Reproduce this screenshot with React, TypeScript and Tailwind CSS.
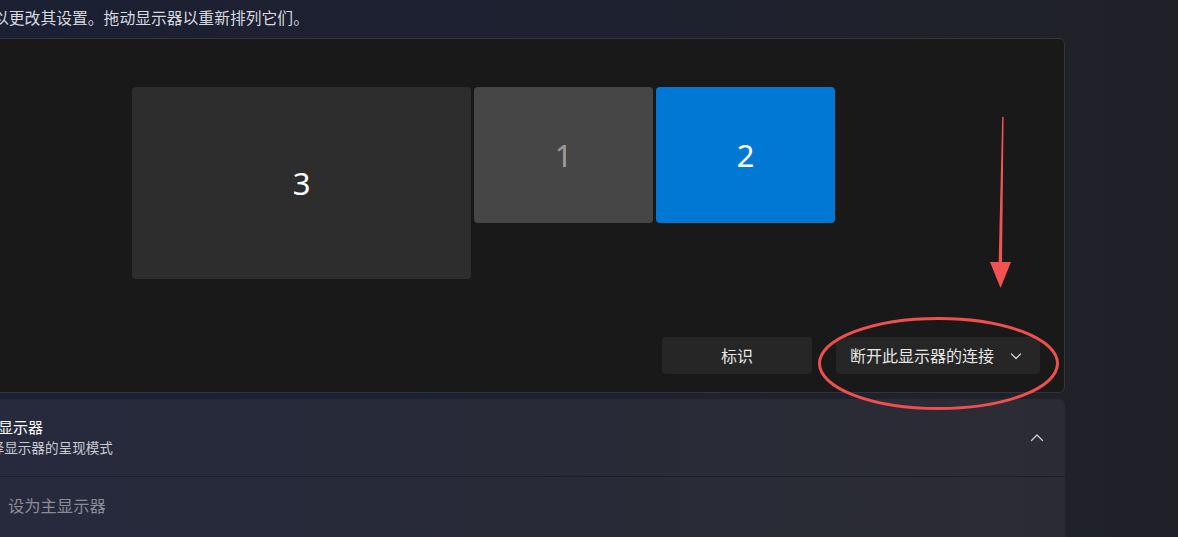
import React from 'react';

const cjk = { fontFamily: '"Noto Sans", "Noto Sans CJK SC", sans-serif' };

const monitors = [
  { id: '3', className: 'left-[191px] top-[48px] w-[339px] h-[192px] bg-[#2d2d2d] text-white' },
  { id: '1', className: 'left-[533px] top-[48px] w-[179px] h-[136px] bg-[#464646] text-[#9c9c9c]' },
  { id: '2', className: 'left-[715px] top-[48px] w-[179px] h-[136px] bg-[#0078d4] text-white' },
];

function Chevron({ up }: { up?: boolean }) {
  return (
    <svg width="14" height="14" viewBox="0 0 14 14" fill="none">
      <polyline
        points={up ? '1.5,9.5 7,4 12.5,9.5' : '2.5,5 7,9.5 11.5,5'}
        stroke="#d0d0d0"
        strokeWidth="1.3"
        strokeLinecap="round"
        strokeLinejoin="round"
      />
    </svg>
  );
}

export default function App() {
  return (
    <div
      className="relative w-[1178px] h-[537px] overflow-hidden bg-gradient-to-r from-[#1b2032] via-[#1e2130] to-[#202127]"
      style={cjk}
    >
      <div className="ml-[-60px] w-[1125px]">
        {/* description */}
        <div className="h-[38px] flex items-center pl-[53px] text-[15.8px] text-[#d8dae0] whitespace-nowrap">
          以更改其设置。拖动显示器以重新排列它们。
        </div>

        {/* arrangement panel */}
        <div className="h-[355px] flex flex-col bg-[#191919] border border-[#34353a] rounded-md">
          <div className="relative flex-1">
            {monitors.map((m) => (
              <div
                key={m.id}
                className={`absolute rounded-[4px] flex items-center justify-center text-[31px] ${m.className}`}
              >
                {m.id}
              </div>
            ))}
          </div>
          <div className="flex justify-end gap-[24px] pr-[24px] pb-[18px]">
            <button className="w-[150px] h-[37px] rounded-[4px] bg-[#262626] text-[16px] text-[#e6e6e6]">
              标识
            </button>
            <button className="w-[204px] h-[37px] rounded-[4px] bg-[#262626] text-[16px] text-[#e6e6e6] flex items-center justify-between pl-[14px] pr-[17px]">
              <span>断开此显示器的连接</span>
              <Chevron />
            </button>
          </div>
        </div>

        {/* multiple displays card */}
        <div className="mt-[6px] rounded-t-md bg-gradient-to-r from-[#262a3d] via-[#282a38] to-[#2b2c33]">
          <div className="h-[77px] flex items-center justify-between pl-[43px] pr-[21px]">
            <div className="flex flex-col">
              <span className="text-[15px] text-white leading-[21px]">多显示器</span>
              <span className="ml-[-6px] text-[13.6px] text-[#c9cbd3] leading-[20px]">选择显示器的呈现模式</span>
            </div>
            <Chevron up />
          </div>
          <div className="h-px bg-[#1d1f2a]" />
          <div className="h-[60px] flex items-center pl-[68px] pb-[2px] text-[16.3px] text-[#8a8c96]">
            设为主显示器
          </div>
        </div>
      </div>

      {/* annotations */}
      <svg className="absolute left-0 top-0 pointer-events-none" width="1178" height="537">
        <ellipse cx="938.5" cy="363.5" rx="119" ry="45" fill="none" stroke="#ef4f4f" strokeWidth="3" />
        <polygon points="1002.2,117 1003.6,117 1002,264 998.6,264" fill="#f25252" />
        <polygon points="990,262 1011,262 1000.5,288" fill="#f25252" />
      </svg>
    </div>
  );
}
